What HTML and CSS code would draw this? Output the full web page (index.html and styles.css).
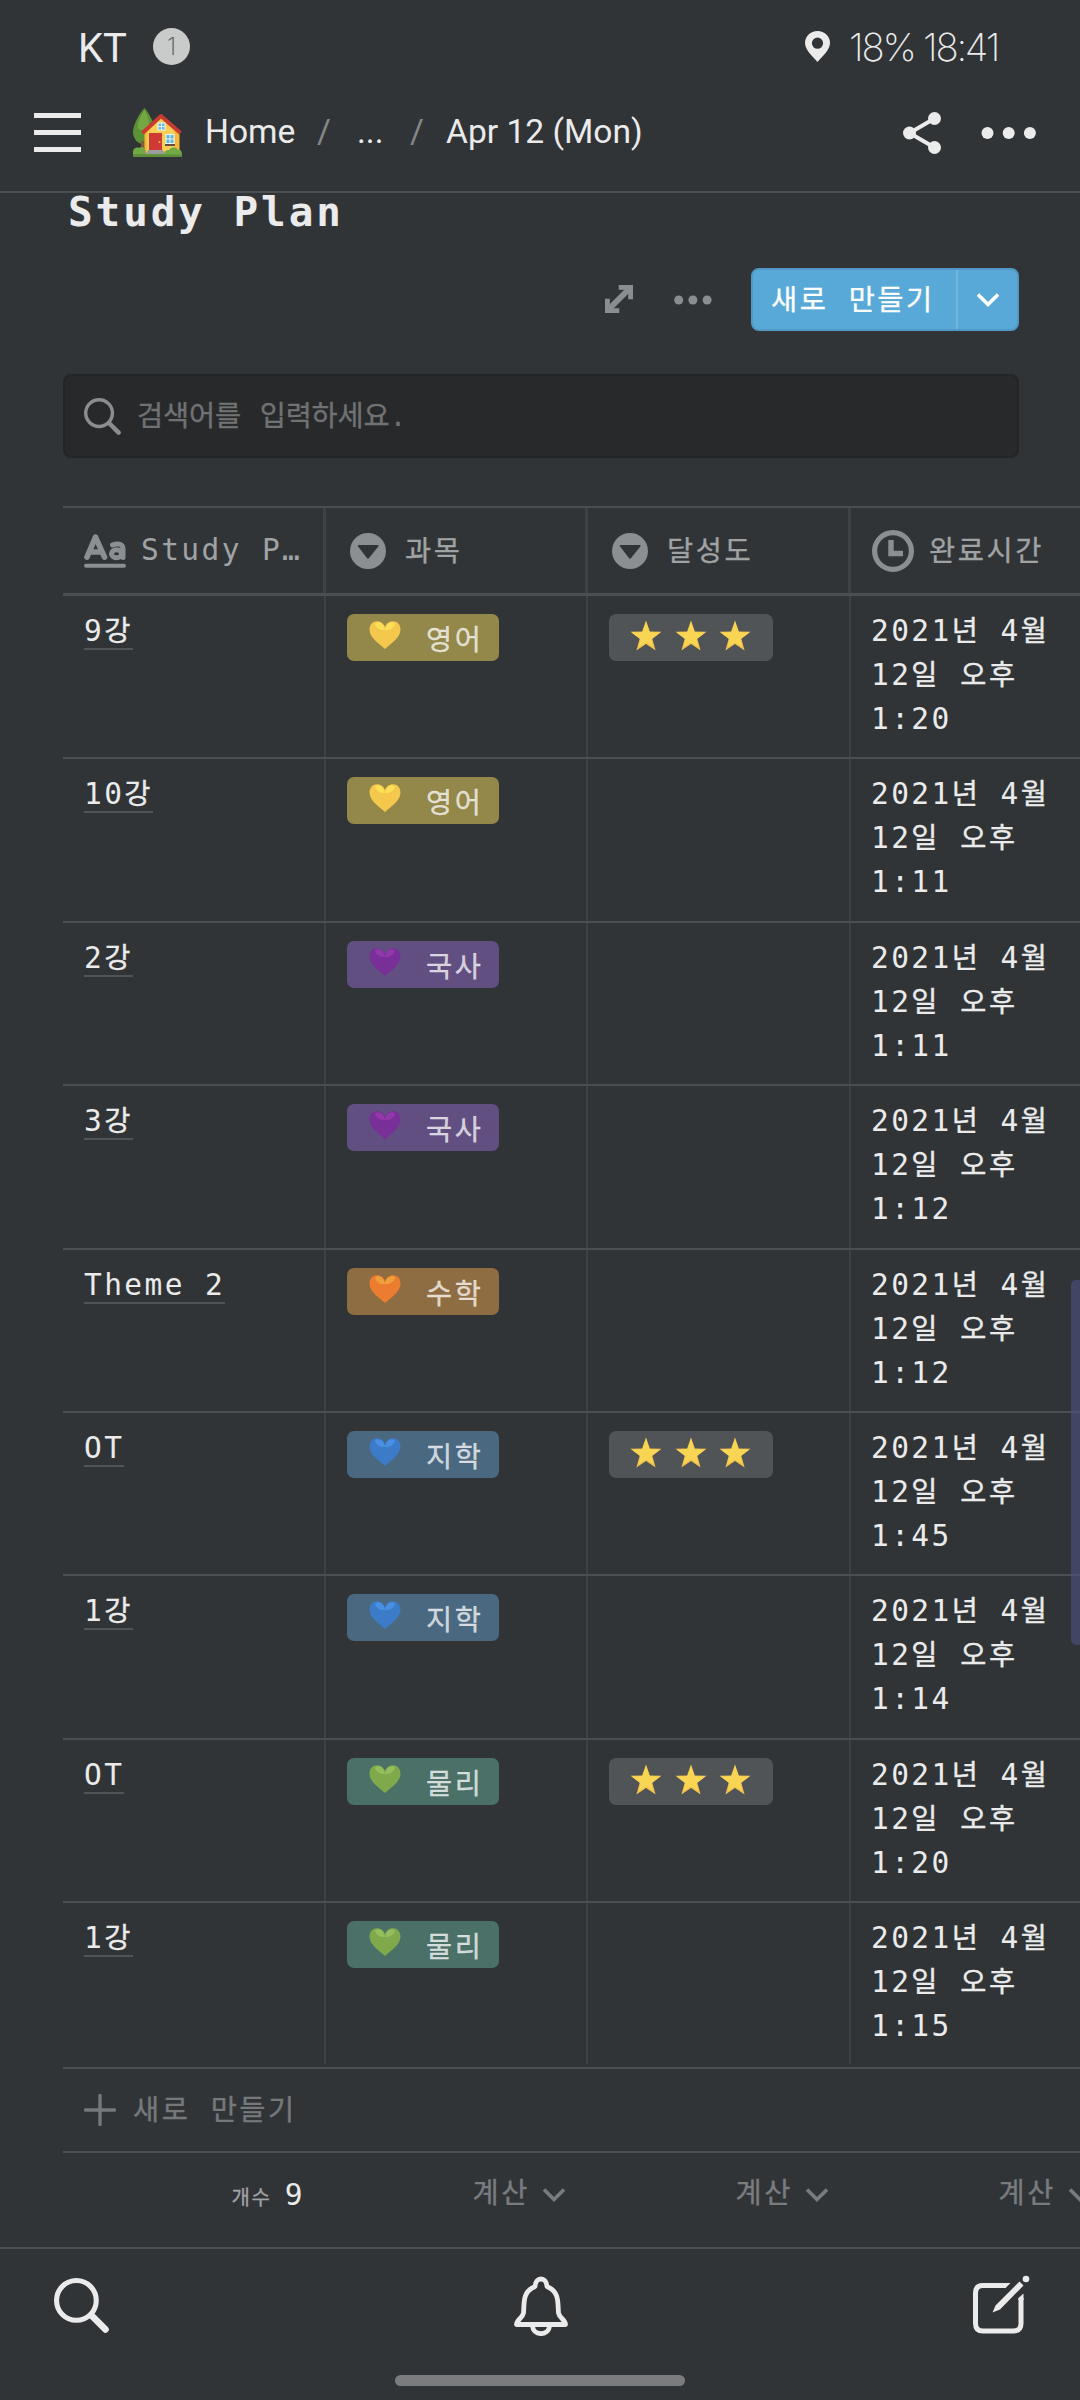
FILE: index.html
```html
<!DOCTYPE html>
<html lang="ko">
<head>
<meta charset="utf-8">
<title>Study Plan</title>
<link rel="stylesheet" href="styles.css">
</head>
<body>
<svg class="defs" width="0" height="0">
  <symbol id="heart" viewBox="0 0 32 28">
    <path class="heart-base" d="M16 28C10.500 23 0.500 17 0.500 8.500C0.500 3.500 3.800 0.300 8 0.300C11.800 0.300 14.800 2.600 16 6C17.200 2.600 20.200 0.300 24 0.300C28.200 0.300 31.500 3.500 31.500 8.500C31.500 17 21.500 23 16 28Z"/>
    <path class="heart-light" d="M6 2.500C9.500 -0.500 15 2 16 9C12 9.500 7 7.500 6 2.500ZM26 2.500C22.500 -0.500 17 2 16 9C20 9.500 25 7.500 26 2.500Z"/>
  </symbol>
  <symbol id="star" viewBox="0 0 32 32">
    <path fill="#f2c14a" d="M16 .5l3.900 10.900 11.600.3-9.200 7 3.300 11.900L16 24l-9.600 6.600 3.300-11.900-9.200-7 11.600-.3z"/>
    <path fill="#f8d654" d="M16 1.500l3.400 10.500 11 .4-9 6.800 2 7.800L16 22.500l-7.400 4.500 2-7.800-9-6.800 11-.4z"/>
  </symbol>
  <symbol id="select" viewBox="0 0 36 36"><path fill="currentColor" fill-rule="evenodd" d="M18 0a18 18 0 1 1 0 36a18 18 0 0 1 0-36zM8.500 12h19.500q1 .2.500 1.200L18.900 25.200q-.9.900-1.800 0L7.900 13.200q-.4-1 .6-1.200z"/></symbol>
  <symbol id="chevron" viewBox="0 0 24 16"><path d="M2 2.500l10 10 10-10" fill="none" stroke="currentColor" stroke-width="3.600"/></symbol>
  <symbol id="search" viewBox="0 0 54 54"><circle cx="22" cy="22" r="19.500" fill="none" stroke="currentColor" stroke-width="5"/><path d="M36.500 36.500L50.500 50.500" stroke="currentColor" stroke-width="6.500" stroke-linecap="round"/></symbol>
</svg>

<div class="screen">
  <header class="status">
    <span class="carrier">KT</span>
    <span class="badge">1</span>
    <svg class="pin" viewBox="0 0 25 31"><path fill="currentColor" fill-rule="evenodd" d="M12.500 0C19.500 0 25 5.200 25 12C25 19 17.500 25 12.500 31C7.500 25 0 19 0 12C0 5.200 5.500 0 12.500 0zM12.500 6.600a5.600 5.600 0 1 0 0 11.200a5.600 5.600 0 0 0 0-11.200z"/></svg>
    <span class="clock">18% 18:41</span>
  </header>

  <nav class="topbar">
    <svg class="menu" viewBox="0 0 47 39"><path stroke="currentColor" stroke-width="5" d="M0 2.500h47M0 19.500h47M0 36.500h47"/></svg>
    <svg class="house" viewBox="0 0 49 49">
      <path fill="#5d9137" d="M11.500 0C6 6 0 17 0 24C0 31 5 36 10 36C17 36 22 31 22 24C22 17 17 6 11.500 0z"/>
      <path fill="#75a843" d="M11.500 2C8 9 4 14 5 20C7 24 14 22 16 17C17 12 14 7 11.500 2z"/>
      <path fill="#825b3c" d="M8 33h4v10h-4z"/>
      <path fill="#f5b83b" d="M11.500 23L28 8L46.500 24V46H11.500z"/>
      <path fill="#f9cf58" d="M14 24L28 11L42 24V43H14z"/>
      <path fill="none" stroke="#c93a31" stroke-width="3.800" stroke-linejoin="round" d="M9.500 25L28 8L47.500 25"/>
      <path fill="#cf3a34" d="M16 25h13v17H16z"/>
      <circle cx="26.500" cy="34" r="1" fill="#f5b83b"/>
      <path fill="#eef5f5" d="M24.500 14.500h8v8h-8zM32.500 26h9v10h-9z"/>
      <path fill="#5fb8e4" d="M25.500 15.500h2.500v2.500h-2.500zM29 15.500h2.500v2.500H29zM25.500 19h2.500v2.500h-2.500zM29 19h2.500v2.500H29zM33.500 27h3v3.500h-3zM37.500 27h3v3.500h-3zM33.500 31.500h3v3.500h-3zM37.500 31.500h3v3.500h-3z"/>
      <path fill="#6b4a40" d="M32 36h10v2h-10z"/>
      <path fill="#9c9e9d" d="M15 42h15l2 4H13z"/>
      <path fill="#5c8f38" d="M0 46H49V49H0z"/>
      <path fill="#72a945" d="M0 46C-1 41 3 38.500 6 40C10 37 13.500 42 13 46.500H31C31 43 34 41.500 36 42C39 38 44 39 45 42C47 41 49 43 49 46.500z"/>
    </svg>
    <span class="crumb home">Home</span>
    <span class="slash">/</span>
    <span class="crumb dots">...</span>
    <span class="slash">/</span>
    <span class="crumb page">Apr 12 (Mon)</span>
    <svg class="share" viewBox="0 0 38 42"><path d="M31.500 6.500L6.500 21L31.500 35.500" fill="none" stroke="currentColor" stroke-width="4"/><circle cx="31.500" cy="6.500" r="6.500" fill="currentColor"/><circle cx="6.500" cy="21" r="6.500" fill="currentColor"/><circle cx="31.500" cy="35.500" r="6.500" fill="currentColor"/></svg>
    <svg class="more" viewBox="0 0 56 12"><g fill="currentColor"><circle cx="6.500" cy="6" r="6"/><circle cx="27.700" cy="6" r="6"/><circle cx="48.900" cy="6" r="6"/></g></svg>
  </nav>

  <main class="content">
    <h1>Study Plan</h1>
    <div class="tools">
      <svg class="expand" viewBox="0 0 28 28"><path d="M14 0H28V14H23.500V8.200L8.200 23.500H14V28H0V14H4.500V19.800L19.800 4.500H14z" fill="currentColor" stroke="currentColor" stroke-width=".6"/></svg>
      <svg class="more-small" viewBox="0 0 38 10"><g fill="currentColor"><circle cx="4.700" cy="5" r="4.500"/><circle cx="18.900" cy="5" r="4.500"/><circle cx="33.100" cy="5" r="4.500"/></g></svg>
      <div class="new-button"><span class="new-label"><span class="ko">새로</span> <span class="ko">만들기</span></span><span class="new-drop"><svg viewBox="0 0 24 16"><use href="#chevron"/></svg></span></div>
    </div>
    <div class="searchbox"><svg viewBox="0 0 54 54"><use href="#search"/></svg><span class="placeholder"><span class="ko">검색어를</span> <span class="ko">입력하세요</span>.</span></div>

    <section class="table">
      <div class="head">
        <div class="cell title"><svg class="aa" viewBox="0 0 42 34"><g fill="none" stroke="currentColor" stroke-linecap="round" stroke-linejoin="round"><path stroke-width="5.600" d="M3 23.200L11.500 3.200L20.500 23.200M6.500 18h10"/><ellipse cx="32.500" cy="19.800" rx="5" ry="4" stroke-width="5"/><path stroke-width="5" d="M28.500 11C33 9 39 9.500 39 15V23.500"/><path stroke-width="4" d="M2 31.700H40"/></g></svg><span class="name">Study P…</span></div>
        <div class="cell"><svg class="sel" viewBox="0 0 36 36"><use href="#select"/></svg><span class="ko">과목</span></div>
        <div class="cell"><svg class="sel" viewBox="0 0 36 36"><use href="#select"/></svg><span class="ko">달성도</span></div>
        <div class="cell time"><svg class="clk" viewBox="0 0 42 42"><circle cx="21" cy="21" r="18.400" fill="none" stroke="currentColor" stroke-width="5.200"/><path d="M19 10v13.500h12" fill="none" stroke="currentColor" stroke-width="5.400"/></svg><span class="ko">완료시간</span></div>
      </div>
      <div class="row">
        <div class="cell"><a>9<span class="ko">강</span></a></div>
        <div class="cell"><div class="tag yellow"><svg viewBox="0 0 32 28"><use href="#heart"/></svg><span class="ko">영어</span></div></div>
        <div class="cell"><div class="tag stars"><svg><use href="#star"/></svg><svg><use href="#star"/></svg><svg><use href="#star"/></svg></div></div>
        <div class="cell date">2021<span class="ko">년</span> 4<span class="ko">월</span><br>12<span class="ko">일</span> <span class="ko">오후</span><br>1:20</div>
      </div>
      <div class="row">
        <div class="cell"><a>10<span class="ko">강</span></a></div>
        <div class="cell"><div class="tag yellow"><svg viewBox="0 0 32 28"><use href="#heart"/></svg><span class="ko">영어</span></div></div>
        <div class="cell"></div>
        <div class="cell date">2021<span class="ko">년</span> 4<span class="ko">월</span><br>12<span class="ko">일</span> <span class="ko">오후</span><br>1:11</div>
      </div>
      <div class="row">
        <div class="cell"><a>2<span class="ko">강</span></a></div>
        <div class="cell"><div class="tag purple"><svg viewBox="0 0 32 28"><use href="#heart"/></svg><span class="ko">국사</span></div></div>
        <div class="cell"></div>
        <div class="cell date">2021<span class="ko">년</span> 4<span class="ko">월</span><br>12<span class="ko">일</span> <span class="ko">오후</span><br>1:11</div>
      </div>
      <div class="row">
        <div class="cell"><a>3<span class="ko">강</span></a></div>
        <div class="cell"><div class="tag purple"><svg viewBox="0 0 32 28"><use href="#heart"/></svg><span class="ko">국사</span></div></div>
        <div class="cell"></div>
        <div class="cell date">2021<span class="ko">년</span> 4<span class="ko">월</span><br>12<span class="ko">일</span> <span class="ko">오후</span><br>1:12</div>
      </div>
      <div class="row">
        <div class="cell"><a>Theme 2</a></div>
        <div class="cell"><div class="tag orange"><svg viewBox="0 0 32 28"><use href="#heart"/></svg><span class="ko">수학</span></div></div>
        <div class="cell"></div>
        <div class="cell date">2021<span class="ko">년</span> 4<span class="ko">월</span><br>12<span class="ko">일</span> <span class="ko">오후</span><br>1:12</div>
      </div>
      <div class="row">
        <div class="cell"><a>OT</a></div>
        <div class="cell"><div class="tag blue"><svg viewBox="0 0 32 28"><use href="#heart"/></svg><span class="ko">지학</span></div></div>
        <div class="cell"><div class="tag stars"><svg><use href="#star"/></svg><svg><use href="#star"/></svg><svg><use href="#star"/></svg></div></div>
        <div class="cell date">2021<span class="ko">년</span> 4<span class="ko">월</span><br>12<span class="ko">일</span> <span class="ko">오후</span><br>1:45</div>
      </div>
      <div class="row">
        <div class="cell"><a>1<span class="ko">강</span></a></div>
        <div class="cell"><div class="tag blue"><svg viewBox="0 0 32 28"><use href="#heart"/></svg><span class="ko">지학</span></div></div>
        <div class="cell"></div>
        <div class="cell date">2021<span class="ko">년</span> 4<span class="ko">월</span><br>12<span class="ko">일</span> <span class="ko">오후</span><br>1:14</div>
      </div>
      <div class="row">
        <div class="cell"><a>OT</a></div>
        <div class="cell"><div class="tag green"><svg viewBox="0 0 32 28"><use href="#heart"/></svg><span class="ko">물리</span></div></div>
        <div class="cell"><div class="tag stars"><svg><use href="#star"/></svg><svg><use href="#star"/></svg><svg><use href="#star"/></svg></div></div>
        <div class="cell date">2021<span class="ko">년</span> 4<span class="ko">월</span><br>12<span class="ko">일</span> <span class="ko">오후</span><br>1:20</div>
      </div>
      <div class="row last">
        <div class="cell"><a>1<span class="ko">강</span></a></div>
        <div class="cell"><div class="tag green"><svg viewBox="0 0 32 28"><use href="#heart"/></svg><span class="ko">물리</span></div></div>
        <div class="cell"></div>
        <div class="cell date">2021<span class="ko">년</span> 4<span class="ko">월</span><br>12<span class="ko">일</span> <span class="ko">오후</span><br>1:15</div>
      </div>
      <div class="new-row"><svg viewBox="0 0 32 32"><path d="M16 1.500v29M1.500 16h29" stroke="currentColor" stroke-width="3.400" stroke-linecap="round"/></svg><span><span class="ko">새로</span> <span class="ko">만들기</span></span></div>
      <div class="totals">
        <div class="count"><span class="ko small">개수</span><span class="nine">9</span></div>
        <div class="calc"><span class="ko">계산</span><svg viewBox="0 0 24 16"><use href="#chevron"/></svg></div>
        <div class="calc"><span class="ko">계산</span><svg viewBox="0 0 24 16"><use href="#chevron"/></svg></div>
        <div class="calc"><span class="ko">계산</span><svg viewBox="0 0 24 16"><use href="#chevron"/></svg></div>
      </div>
    </section>
  </main>

  <footer class="bottom">
    <div class="tabs">
      <svg class="tab-search" viewBox="0 0 54 54"><use href="#search"/></svg>
      <svg class="tab-bell" viewBox="0 0 54 60"><g fill="none" stroke="currentColor" stroke-width="4.800" stroke-linejoin="round"><path d="M21 10.500C21.500 0.500 32.500 0.500 33 10.500C46 16 43.500 27 44.500 37C45.500 42 51.500 44 51.500 48.500H2.500C2.500 44 8.500 42 9.500 37C10.500 27 8 16 21 10.500Z"/><path d="M18.500 49C18.500 60.500 35.500 60.500 35.500 49"/></g></svg>
      <svg class="tab-compose" viewBox="0 0 58 60"><path fill="none" stroke="currentColor" stroke-width="5" d="M34 10.500H11Q3.500 10.500 3.500 18V48.500Q3.500 56 11 56H41.500Q49 56 49 48.500V23"/><path fill="currentColor" d="M32 8H38.500L33.500 13H32zM51.500 18.500V25H46.500V23z"/><path fill="currentColor" d="M47.500 6.500L51.500 10.500L28 34.500L20.500 37.500L23.500 30.500z"/><circle cx="54" cy="4" r="3.300" fill="currentColor"/></svg>
    </div>
    <div class="handle"></div>
  </footer>
  <div class="scroll-edge"></div>
</div>
</body>
</html>
```
FILE: styles.css
```css
* { box-sizing: border-box; }
body { margin: 0; background: #303335; }
svg { display: block; flex: none; }
.defs { position: absolute; }

.screen {
  position: relative;
  width: 1080px;
  height: 2400px;
  overflow: hidden;
  display: flex;
  flex-direction: column;
  background: #303437;
  color: #ebebeb;
  font: 29.500px/44px "DejaVu Sans Mono", "Noto Sans CJK KR", monospace;
  letter-spacing: 2.400px;
}
.ko {
  font-family: "Noto Sans CJK KR", sans-serif;
  font-size: 28.4px;
  letter-spacing: 2.600px;
  line-height: 0;
  -webkit-text-stroke: .35px currentColor;
}

.status {
  height: 93px;
  flex: none;
  display: flex;
  align-items: center;
  padding: 0 80px 0 78px;
  font-family: Roboto, sans-serif;
  letter-spacing: 0;
}
.carrier { font-size: 40px; width: 75px; margin-top: 5px; }
.badge {
  width: 37px;
  height: 37px;
  border-radius: 50%;
  background: #c9cbcb;
  color: #505355;
  font: 200 24px/37px Inter, sans-serif;
  text-align: center;
}
.pin { width: 25px; height: 31px; margin-left: auto; }
.clock {
  width: 151px;
  margin: 1px 0 0 19px;
  font: 200 38.500px/44px Inter, sans-serif;
  letter-spacing: -2.250px;
  white-space: nowrap;
}

.topbar {
  height: 100px;
  flex: none;
  display: flex;
  align-items: center;
  padding: 0 43px 20px 34px;
  border-bottom: 2px solid #4b4f52;
  font: 33.600px/44px Roboto, sans-serif;
  letter-spacing: 0;
}
.menu { width: 47px; height: 39px; margin-top: 1px; }
.house { width: 49px; height: 49px; margin-left: 52px; }
.crumb { white-space: nowrap; }
.home { margin-left: 23px; width: 112px; }
.slash { color: #85888a; width: 40px; }
.dots { width: 53px; }
.slash + .page { margin-left: -4px; }
.share { width: 38px; height: 42px; margin: 1px 0 0 auto; }
.more { width: 56px; height: 12px; margin: 2px 0 0 40px; }

.content { flex: none; height: 2054px; padding-left: 63px; }
h1 {
  margin: 0;
  padding-left: 5px;
  height: 75px;
  font-size: 41px;
  line-height: 38px;
  font-weight: 700;
  letter-spacing: 2.900px;
}
.tools {
  height: 63px;
  display: flex;
  align-items: center;
  justify-content: flex-end;
  padding-right: 61px;
  color: #8b8e91;
}
.expand { width: 28px; height: 28px; margin-top: -2px; }
.more-small { width: 38px; height: 10px; margin: 0 39px 0 41px; }
.new-button {
  width: 268px;
  height: 63px;
  display: flex;
  border: 2px solid #5199c4;
  border-radius: 8px;
  background: #58a8d8;
  color: #fff;
}
.new-label { flex: 1; padding-left: 18px; line-height: 60px; white-space: nowrap; }
.new-drop {
  width: 61px;
  border-left: 2px solid #70b5dd;
  display: flex;
  align-items: center;
  justify-content: center;
}
.new-drop svg { width: 24px; height: 16px; }
.searchbox {
  width: 956px;
  height: 84px;
  margin-top: 43px;
  padding-left: 19px;
  display: flex;
  align-items: center;
  border: 2px solid #242527;
  border-radius: 8px;
  background: #28292b;
  color: #8b8e91;
}
.searchbox svg { width: 37px; height: 37px; }
.placeholder { margin: 2px 0 0 16px; font-size: 28px; letter-spacing: 1.900px; color: #707273; white-space: nowrap; }
.placeholder .ko { letter-spacing: -.150px; }

.table { width: 1051px; margin-top: 48px; border-top: 2px solid #4b4f52; }
.head, .row { display: grid; grid-template-columns: 263px 262px 263px 263px; }
.head {
  height: 88px;
  border-bottom: 3px solid #4b4f52;
  color: #a0a3a4;
}
.cell { border-right: 2px solid #3f4245; padding: 18px 0 0 21px; }
.head .cell {
  display: flex;
  align-items: center;
  padding: 0 0 0 24px;
  border-right-width: 3px;
  white-space: nowrap;
}
.head .title { padding-left: 21px; }
.head .time { padding-left: 21px; }
.head svg { color: #8b8f92; }
.head .ko { margin-top: -4px; }
.aa { width: 42px; height: 34px; }
.name { margin: -1px 0 0 15px; }
.sel { width: 36px; height: 36px; margin-right: 19px; }
.clk { width: 42px; height: 42px; margin-right: 15px; }

.row { height: 163.400px; border-bottom: 2px solid #4b4f52; }
.row a { display: block; width: fit-content; height: 36px; line-height: 35px; border-bottom: 2px solid #505457; white-space: nowrap; }
.row .date { padding: 13px 0 0 20px; white-space: nowrap; }
.row.last { border-bottom: 0; height: 161px; margin-bottom: 3px; }

.tag {
  width: 152px;
  height: 47px;
  border-radius: 7px;
  display: flex;
  align-items: center;
  color: rgba(255, 255, 255, .72);
}
.tag svg { width: 32px; height: 28px; margin: -5px 25px 0 22px; }
.tag .ko { margin-top: 1px; }
.stars { width: 164px; background: #505457; padding-left: 21px; gap: 12.500px; }
.tag.stars svg { width: 32px; height: 32px; margin: -3px 0 0; }
.yellow { background: #93874a; --base: #f4c84c; --light: #fadf57; }
.purple { background: #614f82; --base: #782f98; --light: #9338a8; }
.orange { background: #8f6d42; --base: #ec7d30; --light: #f0a03a; }
.blue { background: #4a6880; --base: #3b7bc8; --light: #4a90e2; }
.green { background: #4a7067; --base: #7fa94b; --light: #94bd5c; }
.heart-base { fill: var(--base); }
.heart-light { fill: var(--light); }

.new-row {
  height: 86px;
  border: solid #4b4f52;
  border-width: 2px 0;
  display: flex;
  align-items: center;
  padding-left: 21px;
  color: #76797b;
}
.new-row svg { width: 32px; height: 32px; margin-right: 17px; }
.totals { display: grid; grid-template-columns: 263px 262px 263px 263px; color: #797c7e; height: 80px; }
.count { display: flex; align-items: baseline; justify-content: flex-end; padding: 20px 21px 0 0; color: #ebebeb; }
.small { font-size: 20px; letter-spacing: 1.800px; color: #a0a3a4; }
.nine { margin-left: 13px; }
.calc { display: flex; align-items: center; justify-content: flex-end; height: 75px; padding-right: 22px; }
.calc svg { width: 24px; height: 16px; margin: 9px 0 0 12px; }

.bottom { height: 153px; flex: none; border-top: 2px solid #4b4f52; background: #303437; }
.tabs { height: 126px; padding: 0 50px 13px 54px; display: flex; justify-content: space-between; align-items: center; }
.tab-search { width: 55px; height: 55px; }
.tab-bell { width: 54px; height: 60px; }
.tab-compose { width: 58px; height: 60px; margin-top: -2px; }
.handle { width: 290px; height: 11px; border-radius: 6px; margin: 0 auto; background: #7b7c7e; }
.scroll-edge {
  position: absolute;
  right: 0;
  top: 1280px;
  width: 9px;
  height: 365px;
  border-radius: 5px 0 0 5px;
  background: rgba(75, 84, 130, .6);
}
```
